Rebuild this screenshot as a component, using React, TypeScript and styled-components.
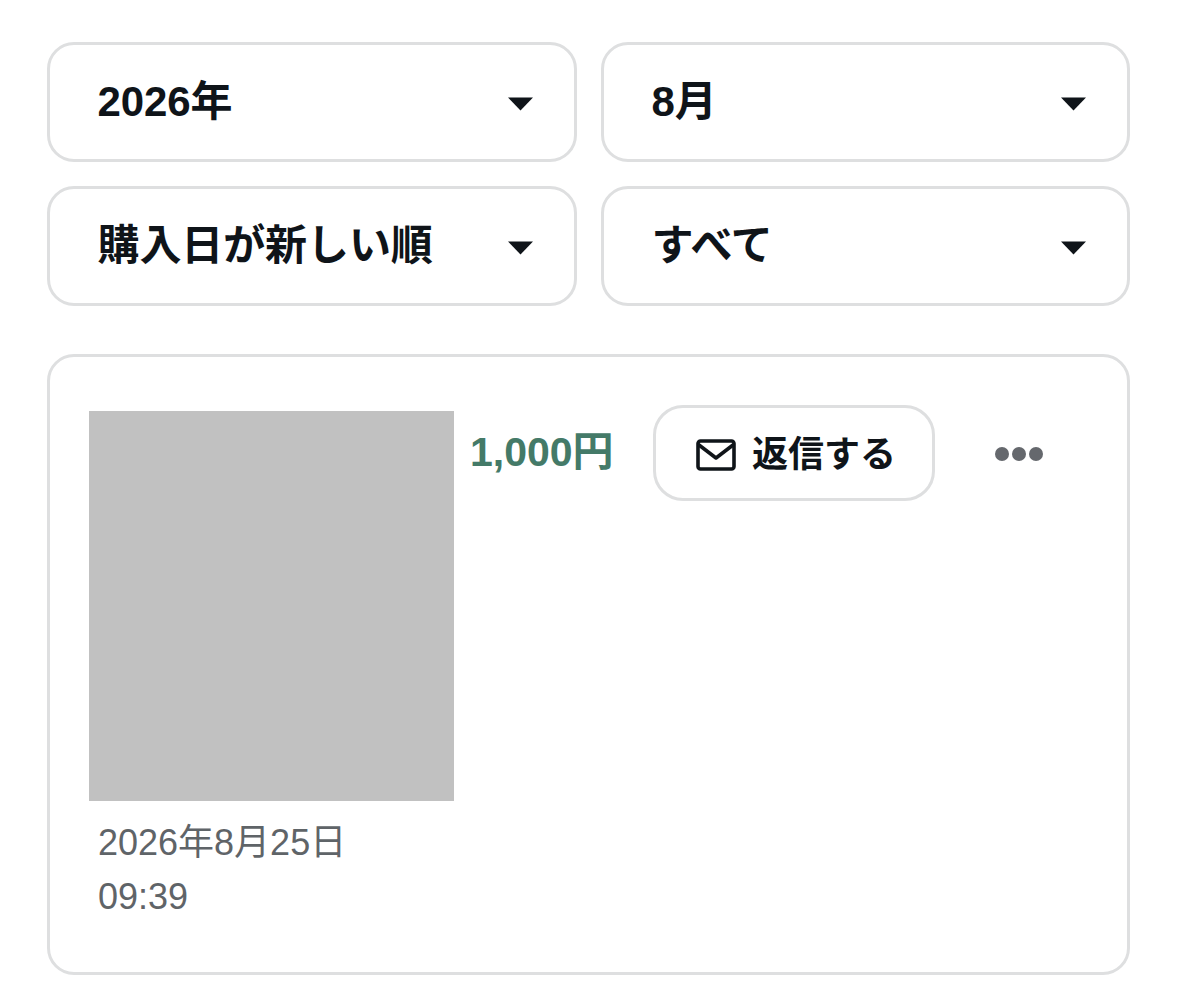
import React from "react";
import styled, { createGlobalStyle } from "styled-components";

const Global = createGlobalStyle`
  html, body { margin: 0; padding: 0; background: #fff; }
  * { box-sizing: border-box; }
  body { font-family: "Liberation Sans", "Noto Sans CJK JP", sans-serif; color: #0f1419; }
`;

const Page = styled.div`
  display: flex;
  flex-direction: column;
  gap: 48px;
  padding: 42px 48px 0 47px;
  width: 1178px;
  height: 992px;
  overflow: hidden;
`;

const Filters = styled.div`
  display: grid;
  grid-template-columns: 530px 529px;
  grid-auto-rows: 120px;
  gap: 24px;
`;

const Select = styled.div`
  display: flex;
  align-items: center;
  justify-content: space-between;
  padding: 0 41px 0 47.5px;
  border: 3px solid #dedfe0;
  border-radius: 27px;
  background: #fff;
`;

const SelectLabel = styled.span`
  font-size: 42px;
  font-weight: 700;
  line-height: 1;
  letter-spacing: -0.1px;
  color: #0f1419;
`;

const Caret = styled.svg`
  display: block;
  width: 25px;
  height: 14px;
  margin-top: 3px;
  fill: #0f1419;
`;

const Card = styled.section`
  display: flex;
  align-items: flex-start;
  width: 1083px;
  height: 621px;
  padding: 48px 0 0 39px;
  border: 3px solid #dedfe0;
  border-radius: 27px;
  background: #fff;
`;

const Media = styled.div`
  display: flex;
  flex-direction: column;
  width: 365px;
  margin-top: 6px;
`;

const Thumb = styled.div`
  width: 365px;
  height: 390px;
  background: #c1c1c1;
`;

const DateText = styled.div`
  padding: 15px 0 0 9px;
  font-size: 36px;
  line-height: 54px;
  color: #5f6468;
  white-space: nowrap;
`;

const Price = styled.div`
  margin: 22px 0 0 16px;
  width: 183px;
  font-size: 41px;
  font-weight: 700;
  line-height: 50px;
  color: #447a68;
  white-space: nowrap;
`;

const ReplyButton = styled.button`
  display: flex;
  align-items: center;
  gap: 16px;
  width: 282px;
  height: 96px;
  padding: 0 0 4px 40px;
  border: 3px solid #dedfe0;
  border-radius: 30px;
  background: #fff;
  font: 700 36px "Liberation Sans", "Noto Sans CJK JP", sans-serif;
  color: #0f1419;
`;

const MailIcon = styled.svg`
  display: block;
  flex: none;
  width: 40px;
  height: 32px;
  margin-top: 7px;
  fill: none;
  stroke: #0f1419;
  stroke-width: 3.6;
  stroke-linejoin: round;
  stroke-linecap: round;
`;

const More = styled.div`
  display: flex;
  gap: 3px;
  margin: 42px 0 0 60px;
`;

const Dot = styled.span`
  width: 14px;
  height: 14px;
  border-radius: 50%;
  background: #65686d;
`;

const filters = ["2026年", "8月", "購入日が新しい順", "すべて"];

export default function App() {
  return (
    <Page>
      <Global />
      <Filters>
        {filters.map((label) => (
          <Select key={label}>
            <SelectLabel>{label}</SelectLabel>
            <Caret viewBox="0 0 25 14" aria-hidden="true">
              <path d="M0 0.5h25L12.5 13.5z" />
            </Caret>
          </Select>
        ))}
      </Filters>
      <Card>
        <Media>
          <Thumb />
          <DateText>
            2026年8月25日
            <br />
            09:39
          </DateText>
        </Media>
        <Price>1,000円</Price>
        <ReplyButton>
          <MailIcon viewBox="0 0 40 32" aria-hidden="true">
            <rect x="2" y="2" width="36" height="28" rx="2.5" />
            <path d="M3 6l17 13L37 6" />
          </MailIcon>
          返信する
        </ReplyButton>
        <More>
          <Dot />
          <Dot />
          <Dot />
        </More>
      </Card>
    </Page>
  );
}
